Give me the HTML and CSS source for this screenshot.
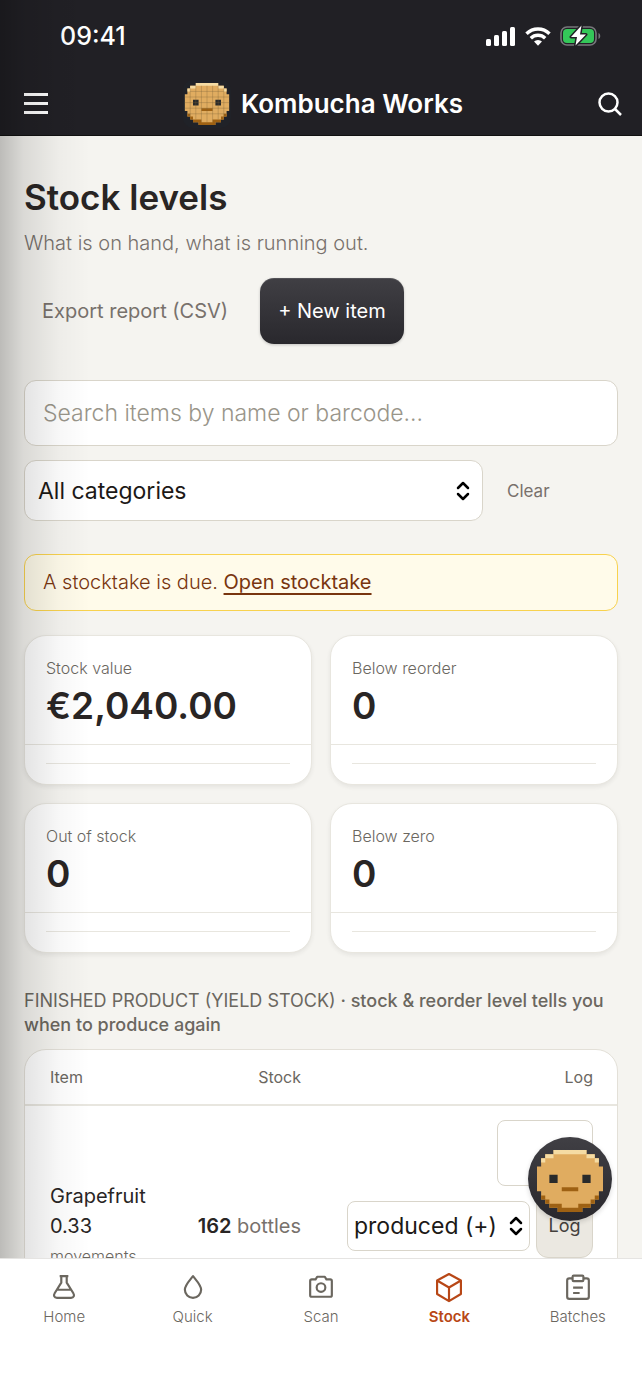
FILE: index.html
```
<!DOCTYPE html>
<html lang="en">
<head>
  <meta charset="UTF-8">
  <meta name="viewport" content="width=device-width, initial-scale=1.0">
  <title>Kombucha Works - Stock levels</title>
  <link rel="stylesheet" href="styles.css">
</head>
<body>
  <svg class="defs" aria-hidden="true">
    <symbol id="face" viewBox="0 0 16 15">
      <path fill="#e0ac60" d="M4 0h8v1h2v1h1v2h1v6h-1v2h-1v1h-1v1h-2v1H5v-1H3v-1H2v-1H1v-2H0V4h1V2h1V1h2z"/>
      <path fill="#f5dca4" d="M4 0h8v1H4zM2 1h2v1H2zM12 1h2v1h-2zM1 2h1v1H1zM14 2h1v1h-1z"/>
      <path fill="#9e6113" d="M1 11h1v1H1zM14 11h1v1h-1zM2 12h1v1H2zM13 12h1v1h-1zM3 13h3v1H3zM10 13h3v1h-3zM5 14h6v1H5zM6 9h4v1H6z"/>
      <path fill="#292a2b" d="M3 6h2v2H3zM11 6h2v2h-2z"/>
    </symbol>
  </svg>

  <div class="app">
    <header class="topbar">
      <div class="status">
        <span class="time">09:41</span>
        <div class="status-icons">
          <svg width="30" height="19" viewBox="0 0 30 19" fill="#fff">
            <rect x="0" y="12" width="5" height="7" rx="1.5"/>
            <rect x="8" y="8" width="5" height="11" rx="1.5"/>
            <rect x="16" y="4" width="5" height="15" rx="1.5"/>
            <rect x="24" y="0" width="5" height="19" rx="1.5"/>
          </svg>
          <svg width="26" height="19" viewBox="0 0 26 19">
            <g fill="none" stroke="#fff" stroke-width="3.4">
              <path d="M1.5 6.7a16.3 16.3 0 0 1 23 0"/>
              <path d="M5.8 11.2a10.3 10.3 0 0 1 14.4 0"/>
            </g>
            <path fill="#fff" d="M13 18.8l-4-4.2a5.7 5.7 0 0 1 8 0z"/>
          </svg>
          <svg width="41" height="23" viewBox="0 0 41 23">
            <rect x="1" y="2" width="35" height="18" rx="6" fill="none" stroke="#77777b" stroke-width="1.6"/>
            <path d="M38.5 8v6c2.3-1 2.3-5 0-6z" fill="#77777b"/>
            <rect x="3" y="4" width="31" height="14" rx="4" fill="#34c759"/>
            <path d="M21.5 .5L11 12h6l-1.500 8.500L26 9.500h-6z" fill="#fff" stroke="#212025" stroke-width="3" paint-order="stroke" stroke-linejoin="round"/>
          </svg>
        </div>
      </div>
      <div class="bar">
        <button class="icon-btn" aria-label="Menu">
          <svg width="24" height="24" viewBox="0 0 24 24" stroke="#fff" stroke-width="3"><path d="M0 2.500h24M0 11.500h24M0 20.500h24"/></svg>
        </button>
        <a class="brand" href="#">
          <span class="brand-logo">
            <svg width="46" height="42" viewBox="0 0 16 15">
              <use href="#face"/>
              <path fill="none" stroke="#7a6035" stroke-opacity=".45" stroke-width=".25" d="M2 2v10M4 1v12M6 1v13M8 1v13M10 1v13M12 1v12M14 2v10M2 3h12M0 5h16M0 7h16M0 9h16M1 11h14"/>
            </svg>
          </span>
          <span>Kombucha Works</span>
        </a>
        <button class="icon-btn" aria-label="Search">
          <svg width="24" height="24" viewBox="0 0 24 24" fill="none" stroke="#fff" stroke-width="2.500"><circle cx="10.500" cy="10.500" r="9"/><path d="M17 17l6 6"/></svg>
        </button>
      </div>
    </header>

    <main class="content">
      <h1>Stock levels</h1>
      <p class="subtitle">What is on hand, what is running out.</p>

      <div class="actions">
        <a class="btn btn-ghost" href="#">Export report (CSV)</a>
        <button class="btn btn-primary">+ New item</button>
      </div>

      <form class="filters">
        <input class="search" type="text" aria-label="Search items" placeholder="Search items by name or barcode…">
        <div class="filter-row">
          <select class="select category" aria-label="Category">
            <option>All categories</option>
          </select>
          <button class="clear" type="reset">Clear</button>
        </div>
      </form>

      <div class="notice">A stocktake is due. <a href="#">Open stocktake</a></div>

      <section class="stats">
        <div class="card">
          <div class="card-body">
            <div class="card-label">Stock value</div>
            <div class="card-value">€2,040.00</div>
          </div>
          <div class="card-foot"><div class="spark"></div></div>
        </div>
        <div class="card">
          <div class="card-body">
            <div class="card-label">Below reorder</div>
            <div class="card-value">0</div>
          </div>
          <div class="card-foot"><div class="spark"></div></div>
        </div>
        <div class="card">
          <div class="card-body">
            <div class="card-label">Out of stock</div>
            <div class="card-value">0</div>
          </div>
          <div class="card-foot"><div class="spark"></div></div>
        </div>
        <div class="card">
          <div class="card-body">
            <div class="card-label">Below zero</div>
            <div class="card-value">0</div>
          </div>
          <div class="card-foot"><div class="spark"></div></div>
        </div>
      </section>

      <h2><span>FINISHED PRODUCT (YIELD STOCK)</span> · stock &amp; reorder level tells you when to produce again</h2>

      <div class="table-card">
        <table>
          <thead>
            <tr>
              <th class="col-item">Item</th>
              <th class="col-stock">Stock</th>
              <th class="col-log">Log</th>
            </tr>
          </thead>
          <tbody>
            <tr>
              <td class="col-item">Grapefruit 0.33 <a class="moves" href="#">movements</a></td>
              <td class="col-stock"><b>162</b> <span class="unit">bottles</span></td>
              <td class="col-log">
                <form class="log-form">
                  <input class="qty" type="text" aria-label="Quantity">
                  <div class="log-row">
                    <select class="select kind" aria-label="Movement type">
                      <option>produced (+)</option>
                    </select>
                    <button class="log-btn" type="button">Log</button>
                  </div>
                </form>
              </td>
            </tr>
          </tbody>
        </table>
      </div>
    </main>

    <nav class="tabbar">
      <a href="#">
        <svg viewBox="0 0 24 24"><path d="M8 2h8M9.500 2v6L3.500 17.500c-1.500 2.500-.5 4.500 2 4.500h13c2.500 0 3.500-2 2-4.500L14.500 8V2M6 14.500h12"/></svg>
        <span>Home</span>
      </a>
      <a href="#">
        <svg viewBox="0 0 24 24"><path d="M12 2c4 5 7.500 8.500 7.500 12.500a7.500 7.500 0 0 1-15 0C4.500 10.500 8 7 12 2z"/></svg>
        <span>Quick</span>
      </a>
      <a href="#">
        <svg viewBox="0 0 24 24"><path d="M3.500 5H7l1.500-2.500h7L17 5h3.500A1.500 1.500 0 0 1 22 6.500v13a1.500 1.500 0 0 1-1.500 1.500h-17A1.500 1.500 0 0 1 2 19.500v-13A1.500 1.500 0 0 1 3.500 5z"/><circle cx="12" cy="12.500" r="4"/></svg>
        <span>Scan</span>
      </a>
      <a class="active" href="#">
        <svg viewBox="0 0 24 24"><path d="M12 0l11 6v12.500L12 25 1 18.500V6zM1 6l11 6.500L23 6M12 12.500V25"/></svg>
        <span>Stock</span>
      </a>
      <a href="#">
        <svg viewBox="0 0 24 24"><path d="M7 4H4a2 2 0 0 0-2 2v15a2 2 0 0 0 2 2h16a2 2 0 0 0 2-2V6a2 2 0 0 0-2-2h-3"/><rect x="7" y="1.500" width="10" height="5" rx="1"/><path d="M7.500 12.500h9M7.500 17.500h6"/></svg>
        <span>Batches</span>
      </a>
    </nav>

    <button class="fab" aria-label="Assistant">
      <svg width="66" height="62"><use href="#face"/></svg>
    </button>
    <div class="edge-shadow"></div>
  </div>
</body>
</html>
```
FILE: styles.css
```
* {
  box-sizing: border-box;
}

body {
  margin: 0;
  font-family: Inter, "Liberation Sans", sans-serif;
  font-size: 20px;
  color: #292524;
  background: #f5f4f0;
}

button, input, select {
  font-family: inherit;
}

button {
  border: none;
  background: none;
  padding: 0;
  cursor: pointer;
}

a {
  color: inherit;
  text-decoration: none;
}

.defs {
  display: none;
}

.app {
  position: relative;
  display: flex;
  flex-direction: column;
  height: 100vh;
  overflow: hidden;
}

/* Top bar */
.topbar {
  flex: none;
  background: #212025;
  color: #fff;
  border-bottom: 1px solid #111;
}

.status {
  display: flex;
  justify-content: space-between;
  align-items: center;
  height: 72px;
  padding: 0 41px 0 60px;
}

.time {
  font-size: 25px;
  font-weight: 500;
}

.status-icons {
  display: flex;
  align-items: center;
  gap: 9px;
}

.bar {
  display: flex;
  justify-content: space-between;
  align-items: center;
  height: 63px;
  padding: 0 20px 0 24px;
}

.icon-btn {
  display: flex;
}

.brand {
  display: flex;
  align-items: center;
  gap: 10px;
  font-size: 26px;
  font-weight: 600;
}

.brand-logo {
  display: flex;
  justify-content: center;
  align-items: center;
  width: 48px;
  height: 48px;
  border-radius: 10px;
  background: #202228;
}

/* Content */
.content {
  flex: 1;
  min-height: 0;
  overflow: hidden;
  padding: 38px 24px 0;
}

h1 {
  margin: 0;
  font-size: 35px;
  line-height: 46px;
  font-weight: 600;
}

.subtitle {
  margin: 8px 0 20px;
  line-height: 30px;
  font-weight: 300;
  color: #78716c;
}

.actions {
  display: flex;
  gap: 14px;
  margin-bottom: 36px;
}

.btn {
  display: flex;
  align-items: center;
  height: 66px;
  padding: 0 18px;
  border-radius: 14px;
  font-size: 20px;
}

.btn-ghost {
  color: #78716c;
}

.btn-primary {
  color: #fff;
  background: linear-gradient(#403f44, #29282d);
  box-shadow: 0 1px 3px rgba(0, 0, 0, 0.2), inset 0 1px 0 rgba(255, 255, 255, 0.1);
}

.filters {
  display: flex;
  flex-direction: column;
  gap: 14px;
  margin-bottom: 33px;
}

.search {
  width: 100%;
  height: 66px;
  padding: 0 18px;
  border: 1px solid #d9d5ca;
  border-radius: 12px;
  background: #fff;
  font-size: 23px;
  font-weight: 300;
}

.search::placeholder {
  color: #99958a;
}

.filter-row {
  display: flex;
  align-items: center;
  gap: 24px;
}

.select {
  appearance: none;
  border: 1px solid #d9d5ca;
  color: #1c1917;
  background: #fff url("data:image/svg+xml,%3Csvg xmlns='http://www.w3.org/2000/svg' width='14' height='20' fill='none' stroke='black' stroke-width='2.500' stroke-linecap='round' stroke-linejoin='round'%3E%3Cpath d='M2 7l5-5 5 5M2 13l5 5 5-5'/%3E%3C/svg%3E") no-repeat right 12px center;
  font-size: 23px;
}

.category {
  width: 459px;
  height: 61px;
  padding: 0 13px;
  border-radius: 12px;
}

.clear {
  font-size: 17px;
  color: #78716c;
}

.notice {
  margin-bottom: 24px;
  padding: 12px 18px;
  border: 1px solid #f8d24e;
  border-radius: 12px;
  background: #fffbea;
  color: #78350f;
  line-height: 31px;
  font-weight: 300;
}

.notice a {
  font-weight: 400;
  text-decoration: underline;
  text-underline-offset: 4px;
}

/* Stat cards */
.stats {
  display: grid;
  grid-template-columns: 1fr 1fr;
  gap: 18px;
  margin-bottom: 36px;
}

.card {
  border: 1px solid #e8e6df;
  border-radius: 22px;
  background: #fff;
  box-shadow: 0 2px 4px rgba(41, 37, 36, 0.08);
}

.card-body {
  height: 108px;
  padding: 19px 21px 0;
}

.card-label {
  font-size: 16px;
  line-height: 26px;
  font-weight: 300;
  color: #6b675f;
}

.card-value {
  font-size: 37px;
  line-height: 50px;
  font-weight: 600;
}

.card-foot {
  height: 40px;
  padding: 18px 21px;
  border-top: 1px solid #e8e6df;
}

.spark {
  border-top: 1px solid #e8e6df;
}

h2 {
  margin: 0 0 12px;
  font-size: 18px;
  line-height: 24px;
  font-weight: 500;
  color: #6b675f;
}

h2 span {
  font-weight: 400;
}

/* Stock table */
.table-card {
  border: 1px solid #e3e0d8;
  border-radius: 22px 22px 0 0;
  background: #fff;
}

table {
  width: 100%;
  border-collapse: collapse;
}

th {
  height: 55px;
  padding: 0 12px;
  border-bottom: 2px solid #e8e6df;
  font-size: 16px;
  font-weight: 400;
  color: #6b675f;
}

td {
  height: 240px;
  padding: 14px 12px;
  line-height: 30px;
  vertical-align: middle;
}

.col-item {
  width: 142px;
  padding-left: 25px;
  text-align: left;
}

.col-stock {
  padding-right: 34px;
  text-align: right;
  white-space: nowrap;
}

.col-log {
  width: 280px;
  padding-right: 24px;
  text-align: right;
}

td.col-log {
  vertical-align: top;
}

b {
  font-weight: 600;
}

.unit {
  color: #78716c;
}

.moves {
  display: block;
  font-size: 16px;
  font-weight: 300;
  color: #6b675f;
}

.log-form {
  display: flex;
  flex-direction: column;
  align-items: flex-end;
  gap: 7px;
}

.qty {
  width: 96px;
  height: 66px;
  border: 1px solid #d9d5ca;
  border-radius: 8px;
}

.log-row {
  display: flex;
  align-items: center;
  gap: 6px;
}

.kind {
  width: 183px;
  height: 50px;
  padding: 0 6px;
  border-radius: 8px;
  background-position: right 6px center;
}

.log-btn {
  width: 57px;
  height: 65px;
  border: 1px solid #d9d5ca;
  border-radius: 12px;
  background: #ebe8e1;
  font-size: 18px;
  color: #44403c;
}

/* Bottom navigation */
.tabbar {
  flex: none;
  display: flex;
  height: 131px;
  padding-top: 14px;
  border-top: 1px solid #e5e4e2;
  background: #fff;
}

.tabbar a {
  flex: 1;
  display: flex;
  flex-direction: column;
  align-items: center;
  gap: 4px;
  font-size: 15px;
  line-height: 24px;
  font-weight: 300;
  color: #6b675f;
}

.tabbar svg {
  width: 26px;
  height: 28px;
  overflow: visible;
  fill: none;
  stroke: currentColor;
  stroke-width: 2;
  stroke-linejoin: round;
}

.tabbar .active {
  color: #b84716;
  font-weight: 600;
}

.fab {
  position: absolute;
  right: 30px;
  bottom: 168px;
  display: flex;
  justify-content: center;
  align-items: center;
  width: 84px;
  height: 84px;
  padding-top: 4px;
  border-radius: 50%;
  background: linear-gradient(#403f44, #29282d);
  box-shadow: 0 2px 5px rgba(0, 0, 0, 0.15);
}

.edge-shadow {
  position: absolute;
  top: 0;
  bottom: 131px;
  left: 0;
  width: 90px;
  background: linear-gradient(to right, rgba(0, 0, 0, 0.23), rgba(0, 0, 0, 0.11) 26%, rgba(0, 0, 0, 0.03) 65%, transparent);
  pointer-events: none;
}
```
